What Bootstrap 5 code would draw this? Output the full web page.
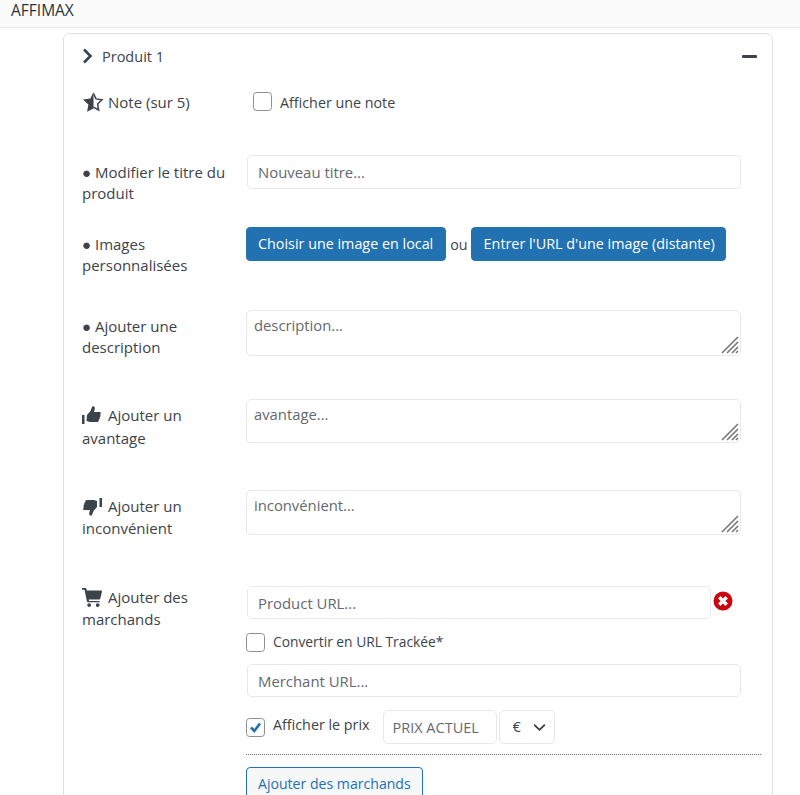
<!DOCTYPE html>
<html lang="fr">
<head>
<meta charset="utf-8">
<title>Affimax</title>
<link href="https://cdn.jsdelivr.net/npm/bootstrap@5.3.0/dist/css/bootstrap.min.css" rel="stylesheet">
<style>
html,body{height:795px;overflow:hidden;background:#fff}
body{font-family:"Open Sans","Noto Sans",sans-serif;font-size:14.3px;line-height:21px;color:#3c434a}
.topbar{height:28px;background:#fbfbfb;border-bottom:1px solid #e8e8e8;padding:0 11px;font-size:15.5px;line-height:21px;color:#2c3338}
.page-wrap{padding:5px 27px 0 63px}
.prod-card{border:1.5px solid #e2e2e2;border-radius:6px;padding:0 15px 0 18px;height:800px;background:#fff}
.prod-head{height:44px}
.prod-head .title{margin-left:9px;font-size:14.5px}
.dash{width:15px;height:3px;background:#3c434a;border-radius:1px}
.form-line{display:flex}
.lab{width:164px;flex:none;padding-right:8px;font-size:15px}
.field{flex:1;min-width:0;padding-right:16px}
.ico{display:inline-block;vertical-align:-4px;fill:#3c434a;margin-right:2px}
.ico-star{margin-right:4px}
.ico-cart{width:20px;height:19px}
.note-line{height:77px;padding-top:14px}
.note-line .lab{margin-top:-1px}
.chk{width:19px;height:19px;flex:none;margin:0;border:1.5px solid #8f8f8f;border-radius:4px}
.form-check-input.chk:checked{background-color:#fff;border-color:#8f8f8f;background-image:none}
.chk-wrap{position:relative;display:flex}
.chk-mark{position:absolute;left:2px;top:2px;pointer-events:none}
.inp{height:34px;border:1.5px solid #e8e8e8;border-radius:5px;font-size:14.9px;color:#3c434a;padding:0 10px;box-shadow:none}
.inp::placeholder,.area::placeholder{color:#646970;opacity:1}
.merch .inp{height:33px}
.url-inp{width:464px;flex:none}
.area{border:1.5px solid #e8e8e8;border-radius:5px;font-size:14.8px;line-height:21px;padding:4px 7px;resize:none;box-shadow:none;display:block;min-height:0}
.grip{position:absolute;right:1px;bottom:1px;pointer-events:none}
.btn-wp{--bs-btn-bg:#2271b1;--bs-btn-border-color:#2271b1;--bs-btn-color:#fff;--bs-btn-hover-bg:#135e96;--bs-btn-hover-color:#fff;height:34px;font-size:14.35px;line-height:32px;border-radius:4px;white-space:nowrap}
.btn-local{padding:0 12px 0 11px}
.btn-remote{padding:0 10px 0 12px}
.btn-wp-o{--bs-btn-bg:#f6f7f7;--bs-btn-border-color:#2271b1;--bs-btn-color:#2271b1;height:34px;padding:0 11px;font-size:14.1px;line-height:32px;border-radius:4px;white-space:nowrap}
.ou{margin:0 3px 0 4px}
.m-title{height:72px}
.m-title .lab,.m-images .lab{padding-top:7px}
.f-title{padding-left:1px}
.m-images{height:83px}
.m-desc{height:89px}
.m-desc .lab{padding-top:6px}
.m-adv{height:91px}
.m-adv .lab{padding-top:5px;line-height:23px}
.m-con{height:96px}
.m-con .lab{padding-top:5px;line-height:22px}
.m-merch .lab{padding-top:0;line-height:22px}
.area-d{height:46px}
.area-a{height:44px}
.area-c{height:45px}
.merch{padding-right:12px}
.url-line{padding-left:1px}
.x-ico{flex:none;margin:-4px 0 0 2px}
.merch-line{padding-left:1px;width:495px}
.check-text{margin-left:8px}
.conv{height:45px;padding-top:14px}
.conv .check-text{font-size:13.8px;margin-left:8px;margin-top:-2px}
.price-line{margin-top:13px;height:34px}
.price-line .check-text{margin-left:8px;margin-top:-6px}
.price-inp{width:114px;height:34px;border:1.5px solid #e8e8e8;border-radius:5px;font-size:14.5px;padding:0 9px;margin-left:13px;box-shadow:none;color:#3c434a}
.price-inp::placeholder{color:#646970;opacity:1}
.cur{width:56px;height:34px;border:1.5px solid #e8e8e8;border-radius:5px;font-size:14.5px;padding:0 0 0 13px;margin-left:2px;box-shadow:none;color:#3c434a;background-position:right 6px center;background-size:17px 13px}
.dots{border:0;border-top:1px dotted #777;margin:10px 0 12px;opacity:1;width:515px}
.note-check{padding-left:7px}
</style>
</head>
<body>
<div class="topbar">AFFIMAX</div>
<div class="page-wrap">
  <div class="card prod-card">
    <div class="prod-head d-flex align-items-center justify-content-between">
      <div class="d-flex align-items-center">
        <svg width="11" height="16" viewBox="0 0 11 16"><path d="M2 1.500 8.500 8 2 14.500" fill="none" stroke="#3c434a" stroke-width="2.600"/></svg>
        <span class="title">Produit 1</span>
      </div>
      <div class="dash"></div>
    </div>

    <div class="form-line note-line">
      <div class="lab">
        <svg class="ico ico-star" width="22" height="21" viewBox="0 0 22 21"><path d="M11.500 1 8.400 7.400 1 8.400l5.400 5.200-1.300 7.200 6.400-3.400z"/><path d="M11.500 2.500l2.500 5.400 6 .9-4.400 4.200 1.100 6-5.200-2.800" fill="none" stroke="#3c434a" stroke-width="1.500"/></svg><span>Note (sur 5)</span>
      </div>
      <div class="field d-flex align-items-start note-check">
        <input class="form-check-input chk" type="checkbox" aria-label="Afficher une note">
        <span class="check-text">Afficher une note</span>
      </div>
    </div>

    <div class="form-line m-title">
      <div class="lab">● Modifier le titre du produit</div>
      <div class="field f-title"><input class="form-control inp" type="text" placeholder="Nouveau titre..."></div>
    </div>

    <div class="form-line m-images">
      <div class="lab">● Images personnalisées</div>
      <div class="field d-flex align-items-center align-self-start">
        <button type="button" class="btn btn-wp btn-local">Choisir une image en local</button>
        <span class="ou">ou</span>
        <button type="button" class="btn btn-wp btn-remote">Entrer l'URL d'une image (distante)</button>
      </div>
    </div>

    <div class="form-line m-desc">
      <div class="lab">● Ajouter une description</div>
      <div class="field"><div class="position-relative">
        <textarea class="form-control area area-d" placeholder="description..."></textarea>
        <svg class="grip" width="20" height="20" viewBox="0 0 20 20"><path d="M2 18 18 2M7 18 18 7M12 18l6-6M16 18l2-2" stroke="#777" stroke-width="1.600" fill="none"/></svg>
      </div></div>
    </div>

    <div class="form-line m-adv">
      <div class="lab">
        <svg class="ico" width="20" height="19" viewBox="0 0 20 19"><rect x="0" y="9" width="2.500" height="9"/><path d="M5 9l3.500-4 1.500-4c.4-1 2.500-.9 2.800.7.2 1.100-.5 3.300-.8 4.300h5.500c1.500 0 1.800 2 .6 2.600.8 1 .5 2.200-.4 2.700.4 1.100 0 2-.9 2.400.2 1.400-.7 2.300-2 2.300h-6.300c-1.500 0-2.500-.7-4-1z"/></svg>
        Ajouter un avantage
      </div>
      <div class="field"><div class="position-relative">
        <textarea class="form-control area area-a" placeholder="avantage..."></textarea>
        <svg class="grip" width="20" height="20" viewBox="0 0 20 20"><path d="M2 18 18 2M7 18 18 7M12 18l6-6M16 18l2-2" stroke="#777" stroke-width="1.600" fill="none"/></svg>
      </div></div>
    </div>

    <div class="form-line m-con">
      <div class="lab">
        <svg class="ico" width="20" height="19" viewBox="0 0 20 19"><rect x="17.500" y="1" width="2.500" height="9"/><path d="M15 10l-3.500 4-1.500 4c-.4 1-2.500.9-2.800-.7-.2-1.100.5-3.300.8-4.300H2.500C1 13 .7 11 1.900 10.400 1.100 9.400 1.400 8.200 2.300 7.700 1.900 6.600 2.300 5.700 3.200 5.300 3 3.900 3.900 3 5.200 3h6.300c1.500 0 2.500.7 3.500 1z"/></svg>
        Ajouter un inconvénient
      </div>
      <div class="field"><div class="position-relative">
        <textarea class="form-control area area-c" placeholder="inconvénient..."></textarea>
        <svg class="grip" width="20" height="20" viewBox="0 0 20 20"><path d="M2 18 18 2M7 18 18 7M12 18l6-6M16 18l2-2" stroke="#777" stroke-width="1.600" fill="none"/></svg>
      </div></div>
    </div>

    <div class="form-line m-merch">
      <div class="lab">
        <svg class="ico ico-cart" viewBox="0 0 21 20"><path d="M0 0h3.500c.6 0 1 .3 1.100.9L5 2.500h15c.7 0 1.100.6 1 1.300l-1.800 7.500c-.1.500-.5.700-1 .7H7l.4 1.700h10.300c.6 0 1 .5 1 1.300H6.200c-.5 0-.9-.3-1-.8L2.600 1.800H0z"/><circle cx="7.500" cy="18" r="2"/><circle cx="16.500" cy="18" r="2"/></svg>
        Ajouter des marchands
      </div>
      <div class="field merch">
        <div class="d-flex align-items-center url-line">
          <input class="form-control inp url-inp" type="text" placeholder="Product URL...">
          <svg class="x-ico" width="20" height="20" viewBox="0 0 20 20"><circle cx="10" cy="10" r="9.500" fill="#c9060f"/><path d="M6.300 6.300l7.400 7.400M13.700 6.300l-7.400 7.400" stroke="#fff" stroke-width="3.400"/></svg>
        </div>
        <div class="d-flex align-items-start conv">
          <input class="form-check-input chk" type="checkbox" aria-label="Convertir">
          <span class="check-text">Convertir en URL Trackée*</span>
        </div>
        <div class="merch-line"><input class="form-control inp" type="text" placeholder="Merchant URL..."></div>
        <div class="d-flex align-items-center price-line">
          <div class="chk-wrap">
            <input class="form-check-input chk" type="checkbox" checked aria-label="Afficher le prix">
            <svg class="chk-mark" width="15" height="15" viewBox="0 0 15 15"><path d="M3 7.500 6.300 11 12 3.500" fill="none" stroke="#2271b1" stroke-width="2.600"/></svg>
          </div>
          <span class="check-text">Afficher le prix</span>
          <input class="form-control price-inp" type="text" placeholder="PRIX ACTUEL">
          <select class="form-select cur" aria-label="Devise"><option>€</option></select>
        </div>
        <hr class="dots">
        <button type="button" class="btn btn-wp-o">Ajouter des marchands</button>
      </div>
    </div>
  </div>
</div>
</body>
</html>
